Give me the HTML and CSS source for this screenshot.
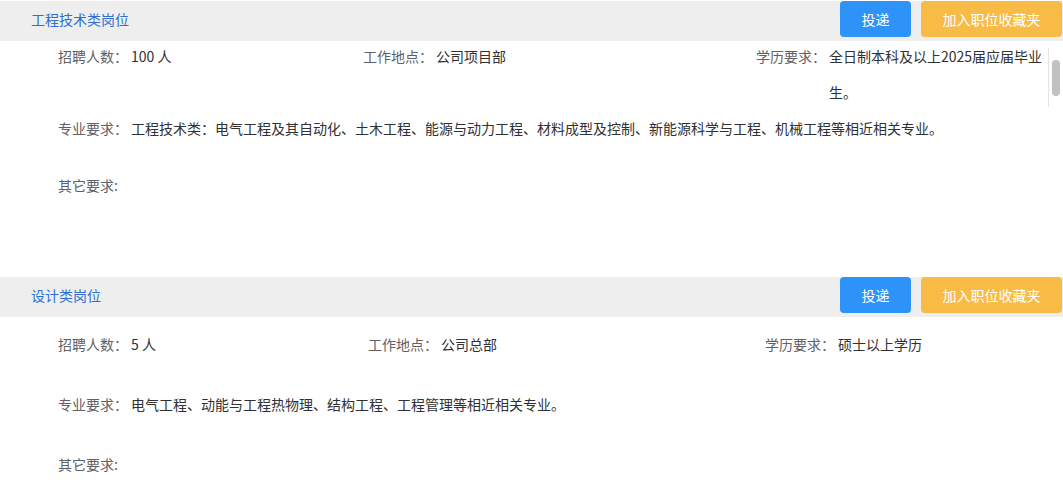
FILE: index.html
```html
<!DOCTYPE html>
<html lang="zh-CN">
<head>
  <meta charset="UTF-8" />
  <meta name="viewport" content="width=device-width, initial-scale=1.0" />
  <title>招聘岗位</title>
  <link rel="stylesheet" href="styles.css">
</head>
<body>
  <div class="job job-first">
    <div class="job-head">
      <span class="job-title">工程技术类岗位</span>
      <div class="job-actions">
        <button class="btn btn-apply">投递</button>
        <button class="btn btn-fav">加入职位收藏夹</button>
      </div>
    </div>
    <div class="job-body">
      <div class="info-row info-cols">
        <div class="field"><span class="label">招聘人数：</span><span class="value">100 人</span></div>
        <div class="field"><span class="label">工作地点：</span><span class="value">公司项目部</span></div>
        <div class="field field-scroll">
          <span class="label">学历要求：</span><span class="value">全日制本科及以上2025届应届毕业生。</span>
          <div class="fake-scroll"><div class="fake-thumb"></div></div>
        </div>
      </div>
      <div class="info-row">
        <div class="field"><span class="label">专业要求：</span><span class="value">工程技术类：电气工程及其自动化、土木工程、能源与动力工程、材料成型及控制、新能源科学与工程、机械工程等相近相关专业。</span></div>
      </div>
      <div class="info-row row-other">
        <div class="field"><span class="label">其它要求:</span><span class="value"></span></div>
      </div>
    </div>
  </div>

  <div class="job job-second">
    <div class="job-head">
      <span class="job-title">设计类岗位</span>
      <div class="job-actions">
        <button class="btn btn-apply">投递</button>
        <button class="btn btn-fav">加入职位收藏夹</button>
      </div>
    </div>
    <div class="job-body">
      <div class="info-row info-cols">
        <div class="field"><span class="label">招聘人数：</span><span class="value">5 人</span></div>
        <div class="field"><span class="label">工作地点：</span><span class="value">公司总部</span></div>
        <div class="field"><span class="label">学历要求：</span><span class="value">硕士以上学历</span></div>
      </div>
      <div class="info-row">
        <div class="field"><span class="label">专业要求：</span><span class="value">电气工程、动能与工程热物理、结构工程、工程管理等相近相关专业。</span></div>
      </div>
      <div class="info-row row-other">
        <div class="field"><span class="label">其它要求:</span><span class="value"></span></div>
      </div>
    </div>
  </div>
</body>
</html>
```

FILE: styles.css
```css
body {
  margin: 0;
  padding-top: 1px;
  font-family: "Noto Sans CJK SC", "Noto Sans", sans-serif;
  font-size: 14px;
  color: #303133;
  background: #fff;
  overflow: hidden;
}
.job-head {
  display: flex;
  align-items: flex-start;
  justify-content: space-between;
  height: 40px;
  padding: 0 1px 0 31px;
  background: #eeeeee;
}
.job-title {
  line-height: 36px;
  color: #2d6fd2;
}
.job-actions {
  display: flex;
  gap: 10px;
}
.btn {
  height: 36px;
  padding: 0;
  border: none;
  border-radius: 4px;
  font-family: inherit;
  font-size: 14px;
  color: #fff;
  cursor: pointer;
}
.btn-apply {
  width: 71px;
  background: #2d93f9;
}
.btn-fav {
  width: 141px;
  background: #f8bc46;
}
.job-body {
  padding: 0 16px 0 58px;
}
.info-row {
  line-height: 36px;
}
.info-cols {
  display: grid;
}
.field {
  display: flex;
  align-items: flex-start;
}
.label {
  flex: 0 0 73px;
  color: #5f6166;
  white-space: nowrap;
}
.value {
  flex: 1;
  min-width: 0;
}
.field-scroll {
  position: relative;
}
.fake-scroll {
  position: absolute;
  top: 10px;
  right: -16px;
  width: 14px;
  height: 59px;
  background: #fff;
  border-left: 1px solid #e4e4e4;
}
.fake-thumb {
  width: 8px;
  height: 36px;
  margin: 12px 0 0 3px;
  border-radius: 4px;
  background: #c1c1c1;
}

/* first block */
.job-first .job-body {
  padding-bottom: 74px;
}
.job-first .info-cols {
  grid-template-columns: 305px 393px 1fr;
  margin-top: -3px;
}
.job-first .row-other {
  margin-top: 21px;
}

/* second block */
.job-second .job-body {
  padding-top: 9px;
}
.job-second .info-cols {
  grid-template-columns: 310px 397px 1fr;
}
.job-second .info-row + .info-row {
  margin-top: 24px;
}
.job-second .row-other {
  margin-top: 20px;
}
```
